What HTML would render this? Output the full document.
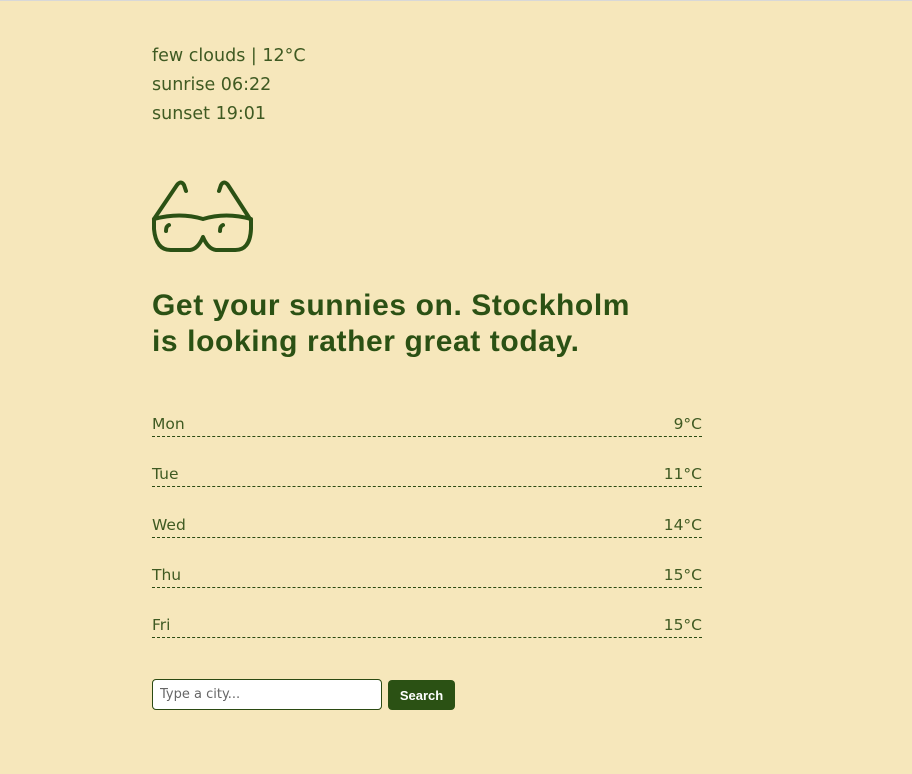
<!DOCTYPE html>
<html><head><meta charset="utf-8"><style>
html,body{margin:0;padding:0;}
body{width:912px;height:774px;background:#f6e7bb;border-top:1px solid #d8d8d8;box-sizing:border-box;position:relative;font-family:"DejaVu Sans","Liberation Sans",sans-serif;color:#3f5a22;overflow:hidden;}
.info{position:absolute;left:152px;top:41px;font-size:17.5px;line-height:29px;}
.glasses{position:absolute;left:150px;top:178px;}
h1{position:absolute;left:152px;top:287px;margin:0;font-family:"Liberation Sans",sans-serif;font-weight:bold;font-size:30px;letter-spacing:0.6px;line-height:36px;color:#2b5114;}
.row{position:absolute;left:152px;width:550px;height:24px;border-bottom:1px dashed #2b4a12;font-size:15.5px;display:flex;justify-content:space-between;align-items:flex-end;line-height:20px;padding-bottom:2px;box-sizing:border-box;}
input{position:absolute;left:152px;top:678px;width:230px;height:31px;box-sizing:border-box;border:1px solid #2b4a12;border-radius:4px;background:#fff;padding:0 7px;font-size:13px;font-family:"DejaVu Sans",sans-serif;}
input::placeholder{color:#666;}
button{position:absolute;left:388px;top:679px;width:67px;height:30px;background:#2b5114;color:#fff;border:none;border-radius:4px;font-family:"Liberation Sans",sans-serif;font-weight:bold;font-size:13px;}
</style></head><body>
<div class="info">few clouds | 12°C<br>sunrise 06:22<br>sunset 19:01</div>
<svg class="glasses" width="106" height="76" viewBox="0 0 106 76" fill="none" stroke="#2b5114" stroke-width="4" stroke-linecap="round" stroke-linejoin="round">
<path d="M4 40 L27 6 Q31 1 34 6 L36 12"/>
<path d="M100 40 L78 6 Q74 1 71 6 L69 12"/>
<path d="M4 40 Q30 33 53 40 Q76 33 101 40 L101 50 Q100 72 84 71 L66 71 Q58 70 53 58 Q48 70 40 71 L22 71 Q6 72 4 50 Z"/>
<path d="M16 52 Q16 47 19 46"/>
<path d="M70 52 Q70 47 73 46"/>
</svg>
<h1>Get your sunnies on. Stockholm<br>is looking rather great today.</h1>
<div class="row" style="top:412px"><span>Mon</span><span>9°C</span></div>
<div class="row" style="top:462px"><span>Tue</span><span>11°C</span></div>
<div class="row" style="top:513px"><span>Wed</span><span>14°C</span></div>
<div class="row" style="top:563px"><span>Thu</span><span>15°C</span></div>
<div class="row" style="top:613px"><span>Fri</span><span>15°C</span></div>
<input placeholder="Type a city...">
<button>Search</button>
</body></html>
